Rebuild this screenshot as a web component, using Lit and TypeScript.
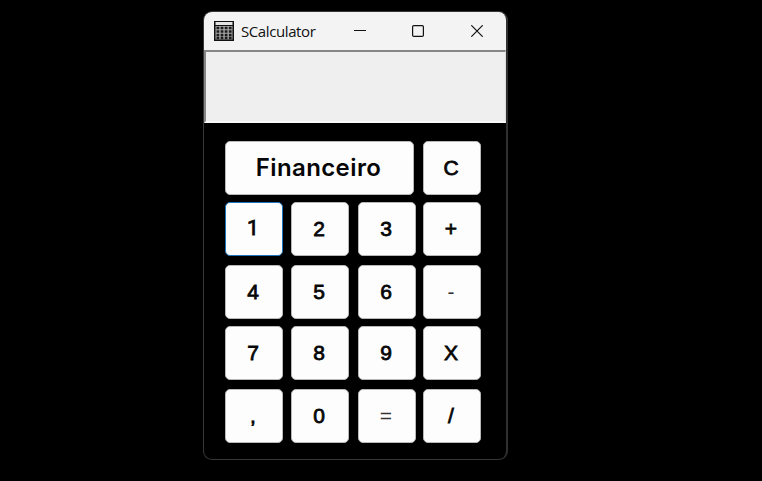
import { LitElement, html, css } from "lit";
import { customElement } from "lit/decorators.js";
import { classMap } from "lit/directives/class-map.js";

const KEYS = ["1", "2", "3", "+", "4", "5", "6", "-", "7", "8", "9", "X", ",", "0", "=", "/"];
const THIN = ["-", "="];

@customElement("app-root")
export class AppRoot extends LitElement {
  static styles = css`
    :host { display: block; width: 100%; height: 481px; padding-top: 11px; box-sizing: border-box; background: #000; overflow: hidden; }
    * { box-sizing: border-box; }
    .window {
      width: 305px; height: 449px; margin-left: 203px;
      border: 1px solid #363636; border-right-width: 2px; border-right-color: #303030;
      border-radius: 9px; overflow: hidden; background: #000;
      display: flex; flex-direction: column;
    }
    .title { height: 38px; flex: none; background: #f3f3f3; display: flex; align-items: center; padding-left: 10px; }
    .icon { width: 20px; height: 20px; flex: none; }
    .name {
      font: 15px/22px "Open Sans", sans-serif; letter-spacing: -0.4px; color: #111;
      margin-left: 7px; width: 80px; white-space: nowrap; flex: none;
    }
    .controls { display: flex; margin-left: 33px; gap: 46px; }
    .controls svg { width: 12px; height: 12px; display: block; fill: none; stroke: #111; }
    .controls svg:last-child { margin-left: 1px; }
    .display {
      height: 73px; flex: none; background: #efefef;
      border-style: solid; border-width: 2px 1px 2px 2px;
      border-color: #868686 #dcdcdc #f8f8f8 #868686;
    }
    .pad {
      display: grid; grid-template-columns: 66px 67px 65px 58px; grid-template-rows: 61px 63px 61px 63px 54px;
      padding: 18px 0 0 21px;
    }
    .key {
      width: 58px; height: 54px;
      border: 1px solid #b8b8b8; border-radius: 5px; background: #fdfdfd; color: #060606; padding: 0 2px 2px 0;
      font: 400 21px/1 "Liberation Sans", Arial, sans-serif; -webkit-text-stroke: 0.8px #060606;
      display: flex; align-items: center; justify-content: center;
    }
    .wide {
      grid-column: 1 / 4; width: 189px; font: 600 24px/1 Inter, sans-serif;
      letter-spacing: 0.4px; padding: 0 2px 0 0; -webkit-text-stroke: 0;
    }
    .clear { grid-column: 4; }
    .focus { border-color: #1d74bd; font-family: Roboto, sans-serif; }
    .thin { color: #333; -webkit-text-stroke: 0; }
  `;

  render() {
    return html`
      <div class="window">
        <div class="title">
          <svg class="icon" viewBox="0 0 20 20">
            <rect width="20" height="20" fill="#111" />
            <rect x="1.5" y="1" width="17" height="3" fill="#e4e4e4" />
            <rect x="1.5" y="5" width="17" height="13.5" fill="#aaa" />
            <path d="M2.5 7H18M2.5 10.5H18M2.5 14H18M2.5 17H18" stroke="#1b1b1b" stroke-width="2.3" stroke-dasharray="2.8 1.3" />
          </svg>
          <span class="name">SCalculator</span>
          <div class="controls">
            <svg viewBox="0 0 12 12"><path d="M0 5.5H12" /></svg>
            <svg viewBox="0 0 12 12"><rect x=".6" y=".6" width="10.8" height="10.8" rx="1.2" stroke-width="1.2" /></svg>
            <svg viewBox="0 0 12 12"><path d="M.3 .3L11.7 11.7M11.7 .3L.3 11.7" stroke-width="1.2" /></svg>
          </div>
        </div>
        <div class="display"></div>
        <div class="pad">
          <button class="key wide">Financeiro</button>
          <button class="key clear">C</button>
          ${KEYS.map((k) => html`<button class=${classMap({ key: true, focus: k === "1", thin: THIN.includes(k) })}>${k}</button>`)}
        </div>
      </div>
    `;
  }
}
